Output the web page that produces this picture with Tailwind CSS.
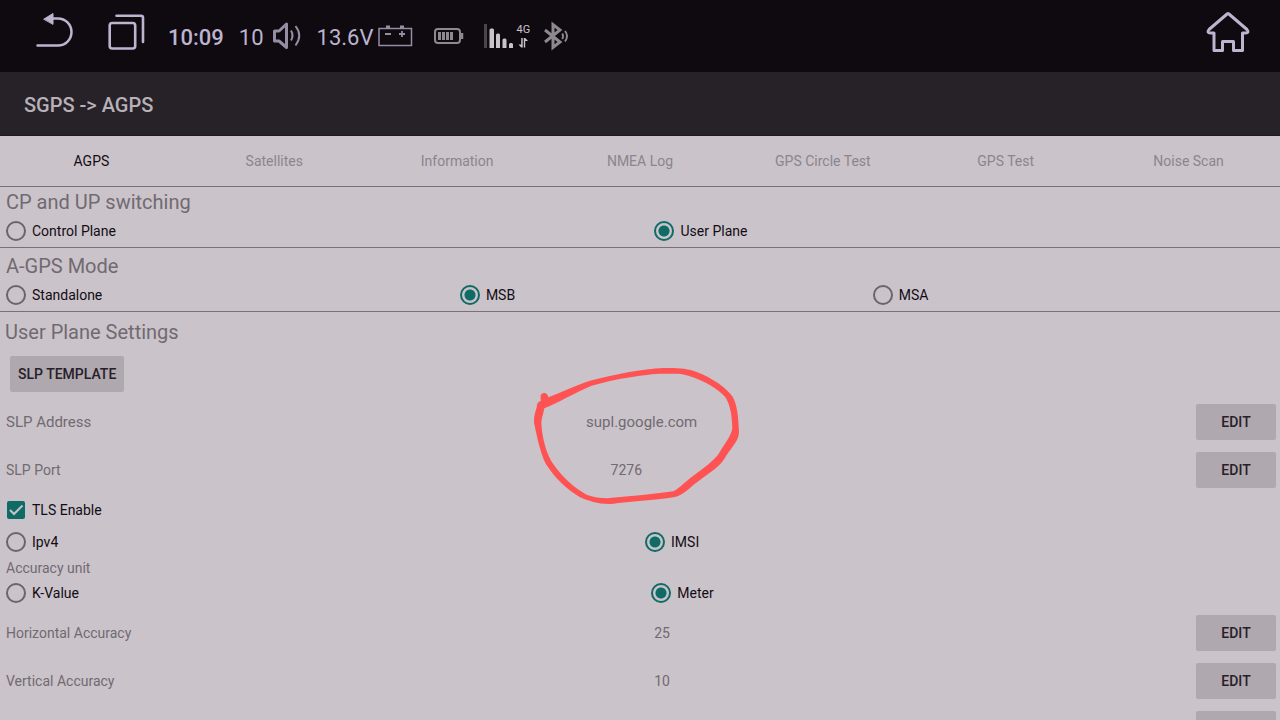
<!DOCTYPE html>
<html lang="en">
<head>
<meta charset="utf-8">
<meta name="viewport" content="width=device-width, initial-scale=1">
<title>SGPS</title>
<script src="https://cdn.jsdelivr.net/npm/@tailwindcss/browser@4"></script>
</head>
<body class="flex h-screen flex-col overflow-hidden bg-[#cac3ca] font-[Roboto,sans-serif] text-sm text-[#130c14]">

<!-- Status bar -->
<header class="flex h-[72px] shrink-0 items-start bg-[#0f0910] pr-[30px] pl-[34px] text-[22px] leading-7 text-[#bdb4cf]">
  <button type="button" aria-label="Back" class="mt-2">
    <svg width="42" height="44" viewBox="0 0 42 44" fill="none" stroke="#bdb4cf" stroke-width="2.500" stroke-linecap="round"><path d="M3.500 37.500H24A13.500 13.500 0 0 0 24 10.500H18"/><path d="M10 11L19 5.500V16Z" fill="#bdb4cf" stroke-width="1"/></svg>
  </button>
  <button type="button" aria-label="Recent apps" class="mt-3 ml-8">
    <svg width="38" height="40" viewBox="0 0 38 40" fill="none" stroke="#bdb4cf" stroke-width="2.600" stroke-linecap="round"><rect x="1.700" y="11" width="25.500" height="25.500" rx="2.500"/><path d="M8.500 3.700H33Q35 3.700 35 5.700V30"/></svg>
  </button>
  <span class="mt-6 ml-[22px] font-medium">10:09</span>
  <span class="mt-6 ml-[15px]">10</span>
  <svg class="mt-5 ml-[7px]" width="32" height="32" viewBox="0 0 32 32" fill="none" stroke="#958da3" stroke-width="3"><path d="M3.500 11H8L15.500 4V27.500L8 21H3.500Z" stroke-linejoin="round"/><path d="M20 10.500Q23 15.500 20 20.500" stroke-width="2"/><path d="M24.500 6Q32 15.500 24.500 25.500" stroke-width="2"/></svg>
  <span class="mt-6 ml-[14px]">13.6V</span>
  <svg class="mt-6 ml-[5px]" width="36" height="24" viewBox="0 0 36 24" fill="none" stroke="#958da3" stroke-width="2"><path d="M1 4.500H33.500V21.500H1Z" stroke-width="1.500"/><path d="M8 3H12M22 3H26" stroke-width="3"/><path d="M7 10H13M21 10H27M24 7V13" stroke-width="1.800"/></svg>
  <svg class="mt-[26px] ml-5" width="30" height="20" viewBox="0 0 30 20" fill="none" stroke="#8f888f" stroke-width="2"><rect x="1" y="3" width="25" height="14" rx="3"/><path d="M28 7V13" stroke-width="2.500"/><path d="M5.500 6V14M9.500 6V14M13.500 6V14M17.500 6V14" stroke-width="3"/></svg>
  <svg class="mt-6 ml-5" width="32" height="24" viewBox="0 0 32 24"><path d="M0 0H3V24H0Z" fill="#4b444b"/><path d="M5.500 6Q5.500 4.500 7 4.500H8.500Q10 4.500 10 6V24H5.500ZM12 11Q12 9.500 13.500 9.500H14.500Q16 9.500 16 11V24H12ZM18.500 16Q18.500 14.500 20 14.500H21Q22.500 14.500 22.500 16V24H18.500ZM25 20.500Q25 19 26.500 19H27.500Q29 19 29 20.500V24H25Z" fill="#cac3ca"/></svg>
  <span class="mt-6 flex flex-col items-center text-[11px] leading-3 text-[#cac3ca]">4G
    <svg width="10" height="12" viewBox="0 0 10 12"><path d="M3.200 2H4.700V11.500H3.200L.5 8.500H3.200ZM5.800 2H7.200L10 5H7.200V11.500H5.800Z" fill="#cac3ca"/></svg>
  </span>
  <svg class="mt-5 ml-[14px]" width="26" height="32" viewBox="0 0 26 32" fill="none" stroke="#8f888f" stroke-width="3"><path d="M1 10L16 22L9 27.500V4.500L16 10L1 22"/><path d="M18.200 13.500Q19.800 16 18.200 19M21 11Q25 16 21 21.500" stroke-width="2"/></svg>
  <button type="button" aria-label="Home" class="mt-2 ml-auto">
    <svg width="44" height="48" viewBox="0 0 44 48" fill="none" stroke="#bdb4cf" stroke-width="3" stroke-linejoin="round"><path d="M20.500 6.500Q22 4.500 23.500 6.500L41 21.500Q43.500 25 39.500 25H36.500V42.500H27.500V33.500H16.500V42.500H8V25H4.500Q.5 25 3 21.500Z"/></svg>
  </button>
</header>

<div class="flex h-16 shrink-0 items-center border-b border-[#1e181f] bg-[#272128] px-6 pt-0.5">
  <h1 class="text-xl font-medium text-[#b8b1b8]">SGPS -&gt; AGPS</h1>
</div>

<nav class="grid h-[51px] shrink-0 grid-cols-7 border-b border-[#797079] text-[#8c858c]">
  <a href="#agps" class="flex items-center justify-center text-[#130c14]">AGPS</a>
  <a href="#satellites" class="flex items-center justify-center">Satellites</a>
  <a href="#information" class="flex items-center justify-center">Information</a>
  <a href="#nmea" class="flex items-center justify-center">NMEA Log</a>
  <a href="#circle" class="flex items-center justify-center">GPS Circle Test</a>
  <a href="#gps" class="flex items-center justify-center">GPS Test</a>
  <a href="#noise" class="flex items-center justify-center">Noise Scan</a>
</nav>

<main id="agps" class="relative">
  <fieldset class="border-b border-[#797079] pt-[3px]">
    <legend class="float-left w-full px-1.5 text-xl leading-[25px] text-[#716a71]">CP and UP switching</legend>
    <div class="flex w-full">
      <label class="flex h-8 flex-auto items-center gap-1.5 pl-1.5"><input type="radio" name="plane" class="size-5 appearance-none rounded-full border-2 border-[#6b646b] checked:border-[#0f6b66] checked:bg-[radial-gradient(circle,#0f6b66_5px,transparent_6px)]">Control Plane</label>
      <label class="flex h-8 flex-auto items-center gap-1.5 pl-1.5"><input type="radio" name="plane" checked class="size-5 appearance-none rounded-full border-2 border-[#6b646b] checked:border-[#0f6b66] checked:bg-[radial-gradient(circle,#0f6b66_5px,transparent_6px)]">User Plane</label>
    </div>
  </fieldset>

  <fieldset class="border-b border-[#797079] pt-1.5">
    <legend class="float-left w-full px-1.5 text-xl leading-[25px] text-[#716a71]">A-GPS Mode</legend>
    <div class="flex w-full">
      <label class="flex h-8 flex-auto items-center gap-1.5 pl-1.5"><input type="radio" name="mode" class="size-5 appearance-none rounded-full border-2 border-[#6b646b] checked:border-[#0f6b66] checked:bg-[radial-gradient(circle,#0f6b66_5px,transparent_6px)]">Standalone</label>
      <label class="flex h-8 flex-auto items-center gap-1.5 pl-1.5"><input type="radio" name="mode" checked class="size-5 appearance-none rounded-full border-2 border-[#6b646b] checked:border-[#0f6b66] checked:bg-[radial-gradient(circle,#0f6b66_5px,transparent_6px)]">MSB</label>
      <label class="flex h-8 flex-auto items-center gap-1.5 pl-1.5"><input type="radio" name="mode" class="size-5 appearance-none rounded-full border-2 border-[#6b646b] checked:border-[#0f6b66] checked:bg-[radial-gradient(circle,#0f6b66_5px,transparent_6px)]">MSA</label>
    </div>
  </fieldset>

  <section class="text-[#716a71]">
    <h2 class="px-[5px] pt-2 text-xl leading-[25px]">User Plane Settings</h2>
    <button type="button" class="mt-[11px] mb-1.5 ml-2.5 block h-9 rounded-xs bg-[#afa8af] px-2 font-medium text-[#272028]">SLP TEMPLATE</button>
    <div class="flex h-12 items-center pr-1 pl-1.5 text-[15px]">
      <span class="flex-auto pt-0.5">SLP Address</span><span class="flex-auto pt-0.5">supl.google.com</span>
      <button type="button" class="ml-1 h-9 w-20 rounded-xs bg-[#afa8af] text-sm font-medium text-[#272028]">EDIT</button>
    </div>
    <div class="flex h-12 items-center pr-1 pl-1.5">
      <span class="flex-auto">SLP Port</span><span class="flex-auto">7276</span>
      <button type="button" class="ml-1 h-9 w-20 rounded-xs bg-[#afa8af] font-medium text-[#272028]">EDIT</button>
    </div>
    <label class="flex h-8 items-center gap-1.5 pl-1.5 text-[#130c14]">
      <span class="relative flex size-5 items-center justify-center">
        <input type="checkbox" checked class="peer size-[18px] appearance-none rounded-xs border-2 border-[#6b646b] checked:border-[#0f6b66] checked:bg-[#0f6b66]">
        <svg class="pointer-events-none absolute inset-0 hidden peer-checked:block" width="20" height="20" viewBox="0 0 20 20" fill="none" stroke="#cac3ca" stroke-width="2"><path d="M4 10L8 14L16.500 5.500"/></svg>
      </span>TLS Enable
    </label>
    <div class="flex text-[#130c14]">
      <label class="flex h-8 flex-auto items-center gap-1.5 pl-1.5"><input type="radio" name="identity" class="size-5 appearance-none rounded-full border-2 border-[#6b646b] checked:border-[#0f6b66] checked:bg-[radial-gradient(circle,#0f6b66_5px,transparent_6px)]">Ipv4</label>
      <label class="flex h-8 flex-auto items-center gap-1.5 pl-1.5"><input type="radio" name="identity" checked class="size-5 appearance-none rounded-full border-2 border-[#6b646b] checked:border-[#0f6b66] checked:bg-[radial-gradient(circle,#0f6b66_5px,transparent_6px)]">IMSI</label>
    </div>
    <p class="px-1.5 pt-0.5 leading-[17px]">Accuracy unit</p>
    <div class="flex text-[#130c14]">
      <label class="flex h-8 flex-auto items-center gap-1.5 pl-1.5"><input type="radio" name="unit" class="size-5 appearance-none rounded-full border-2 border-[#6b646b] checked:border-[#0f6b66] checked:bg-[radial-gradient(circle,#0f6b66_5px,transparent_6px)]">K-Value</label>
      <label class="flex h-8 flex-auto items-center gap-1.5 pl-1.5"><input type="radio" name="unit" checked class="size-5 appearance-none rounded-full border-2 border-[#6b646b] checked:border-[#0f6b66] checked:bg-[radial-gradient(circle,#0f6b66_5px,transparent_6px)]">Meter</label>
    </div>
    <div class="flex h-12 items-center pr-1 pl-1.5">
      <span class="grow basis-[126px]">Horizontal Accuracy</span><span class="flex-auto">25</span>
      <button type="button" class="ml-1 h-9 w-20 rounded-xs bg-[#afa8af] font-medium text-[#272028]">EDIT</button>
    </div>
    <div class="flex h-12 items-center pr-1 pl-1.5">
      <span class="grow basis-[126px]">Vertical Accuracy</span><span class="flex-auto">10</span>
      <button type="button" class="ml-1 h-9 w-20 rounded-xs bg-[#afa8af] font-medium text-[#272028]">EDIT</button>
    </div>
    <div class="flex h-12 items-center justify-end pr-1">
      <button type="button" aria-label="Edit" class="h-9 w-20 rounded-xs bg-[#afa8af]"></button>
    </div>
  </section>

  <!-- Hand-drawn ring around the server address and port -->
  <svg class="pointer-events-none absolute top-[173px] left-1/2 -ml-[120px]" width="240" height="150" viewBox="0 0 720 450"><path fill="#ff5353" fill-rule="evenodd" d="M62 105Q66 98 74 99Q84 101 85 112C120 98 170 75 210 62C280 44 370 26 430 24C470 23 505 25 530 36C580 55 620 85 638 110C652 135 655 170 657 215C657 240 640 255 620 285C605 312 590 325 560 345L520 375C500 393 485 406 465 411C400 422 330 424 275 432C240 434 205 423 180 412C140 388 105 355 78 313C60 275 52 235 42 188C41 170 46 155 50 142Q50 126 62 123ZM73 145C110 130 165 98 215 77C290 55 380 42 430 41C465 41 485 40 505 47C560 65 595 88 615 110C632 135 636 170 637 205C635 225 615 250 595 283C580 303 555 322 510 355C485 375 475 387 460 394C400 402 320 410 262 415C225 413 205 408 190 398C145 370 115 335 95 305C72 265 65 215 64 185C66 170 71 158 73 145Z"/></svg>
</main>
</body>
</html>
